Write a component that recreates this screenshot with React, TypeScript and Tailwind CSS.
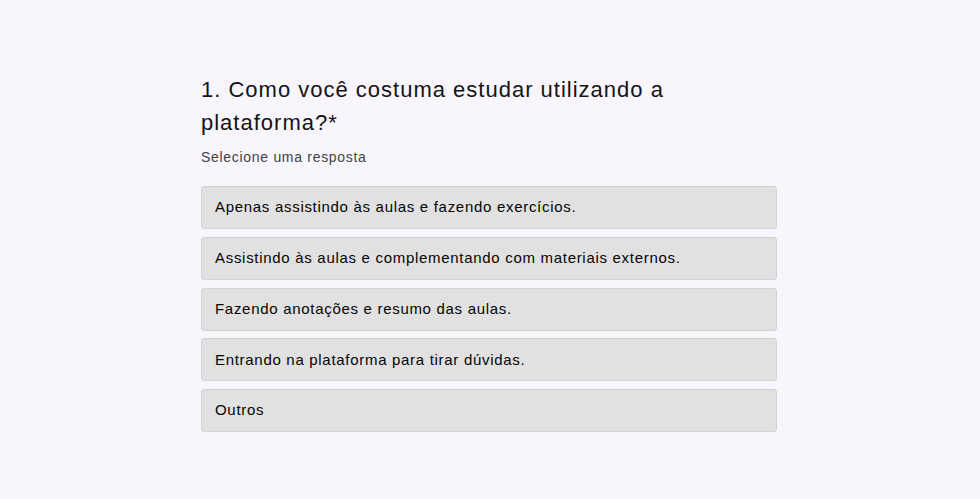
const options = [
  'Apenas assistindo às aulas e fazendo exercícios.',
  'Assistindo às aulas e complementando com materiais externos.',
  'Fazendo anotações e resumo das aulas.',
  'Entrando na plataforma para tirar dúvidas.',
  'Outros',
];

export default function App() {
  return (
    <div className="min-h-[499px] w-full bg-[#f8f5fd] pr-[2px] font-['Liberation_Sans',Arial,sans-serif]">
      <div className="mx-auto w-[576px] pt-[73px]">
        {/* Question */}
        <h1 className="text-[22px] leading-[33px] font-normal tracking-[1px] text-[#141414]">
          1. Como você costuma estudar utilizando a plataforma?*
        </h1>
        <p className="mt-[8px] text-[14px] leading-[20px] tracking-[0.7px] text-[#444]">Selecione uma resposta</p>

        {/* Answers */}
        <div className="mt-[19px] flex flex-col gap-[7.75px]">
          {options.map((opt) => (
            <button
              key={opt}
              className="h-[43px] w-full rounded-[3px] border border-[#d2d2d2] bg-[#e1e1e1] px-[13px] text-left text-[15px] tracking-[0.7px] text-[#050505]"
            >
              {opt}
            </button>
          ))}
        </div>
      </div>
    </div>
  );
}
